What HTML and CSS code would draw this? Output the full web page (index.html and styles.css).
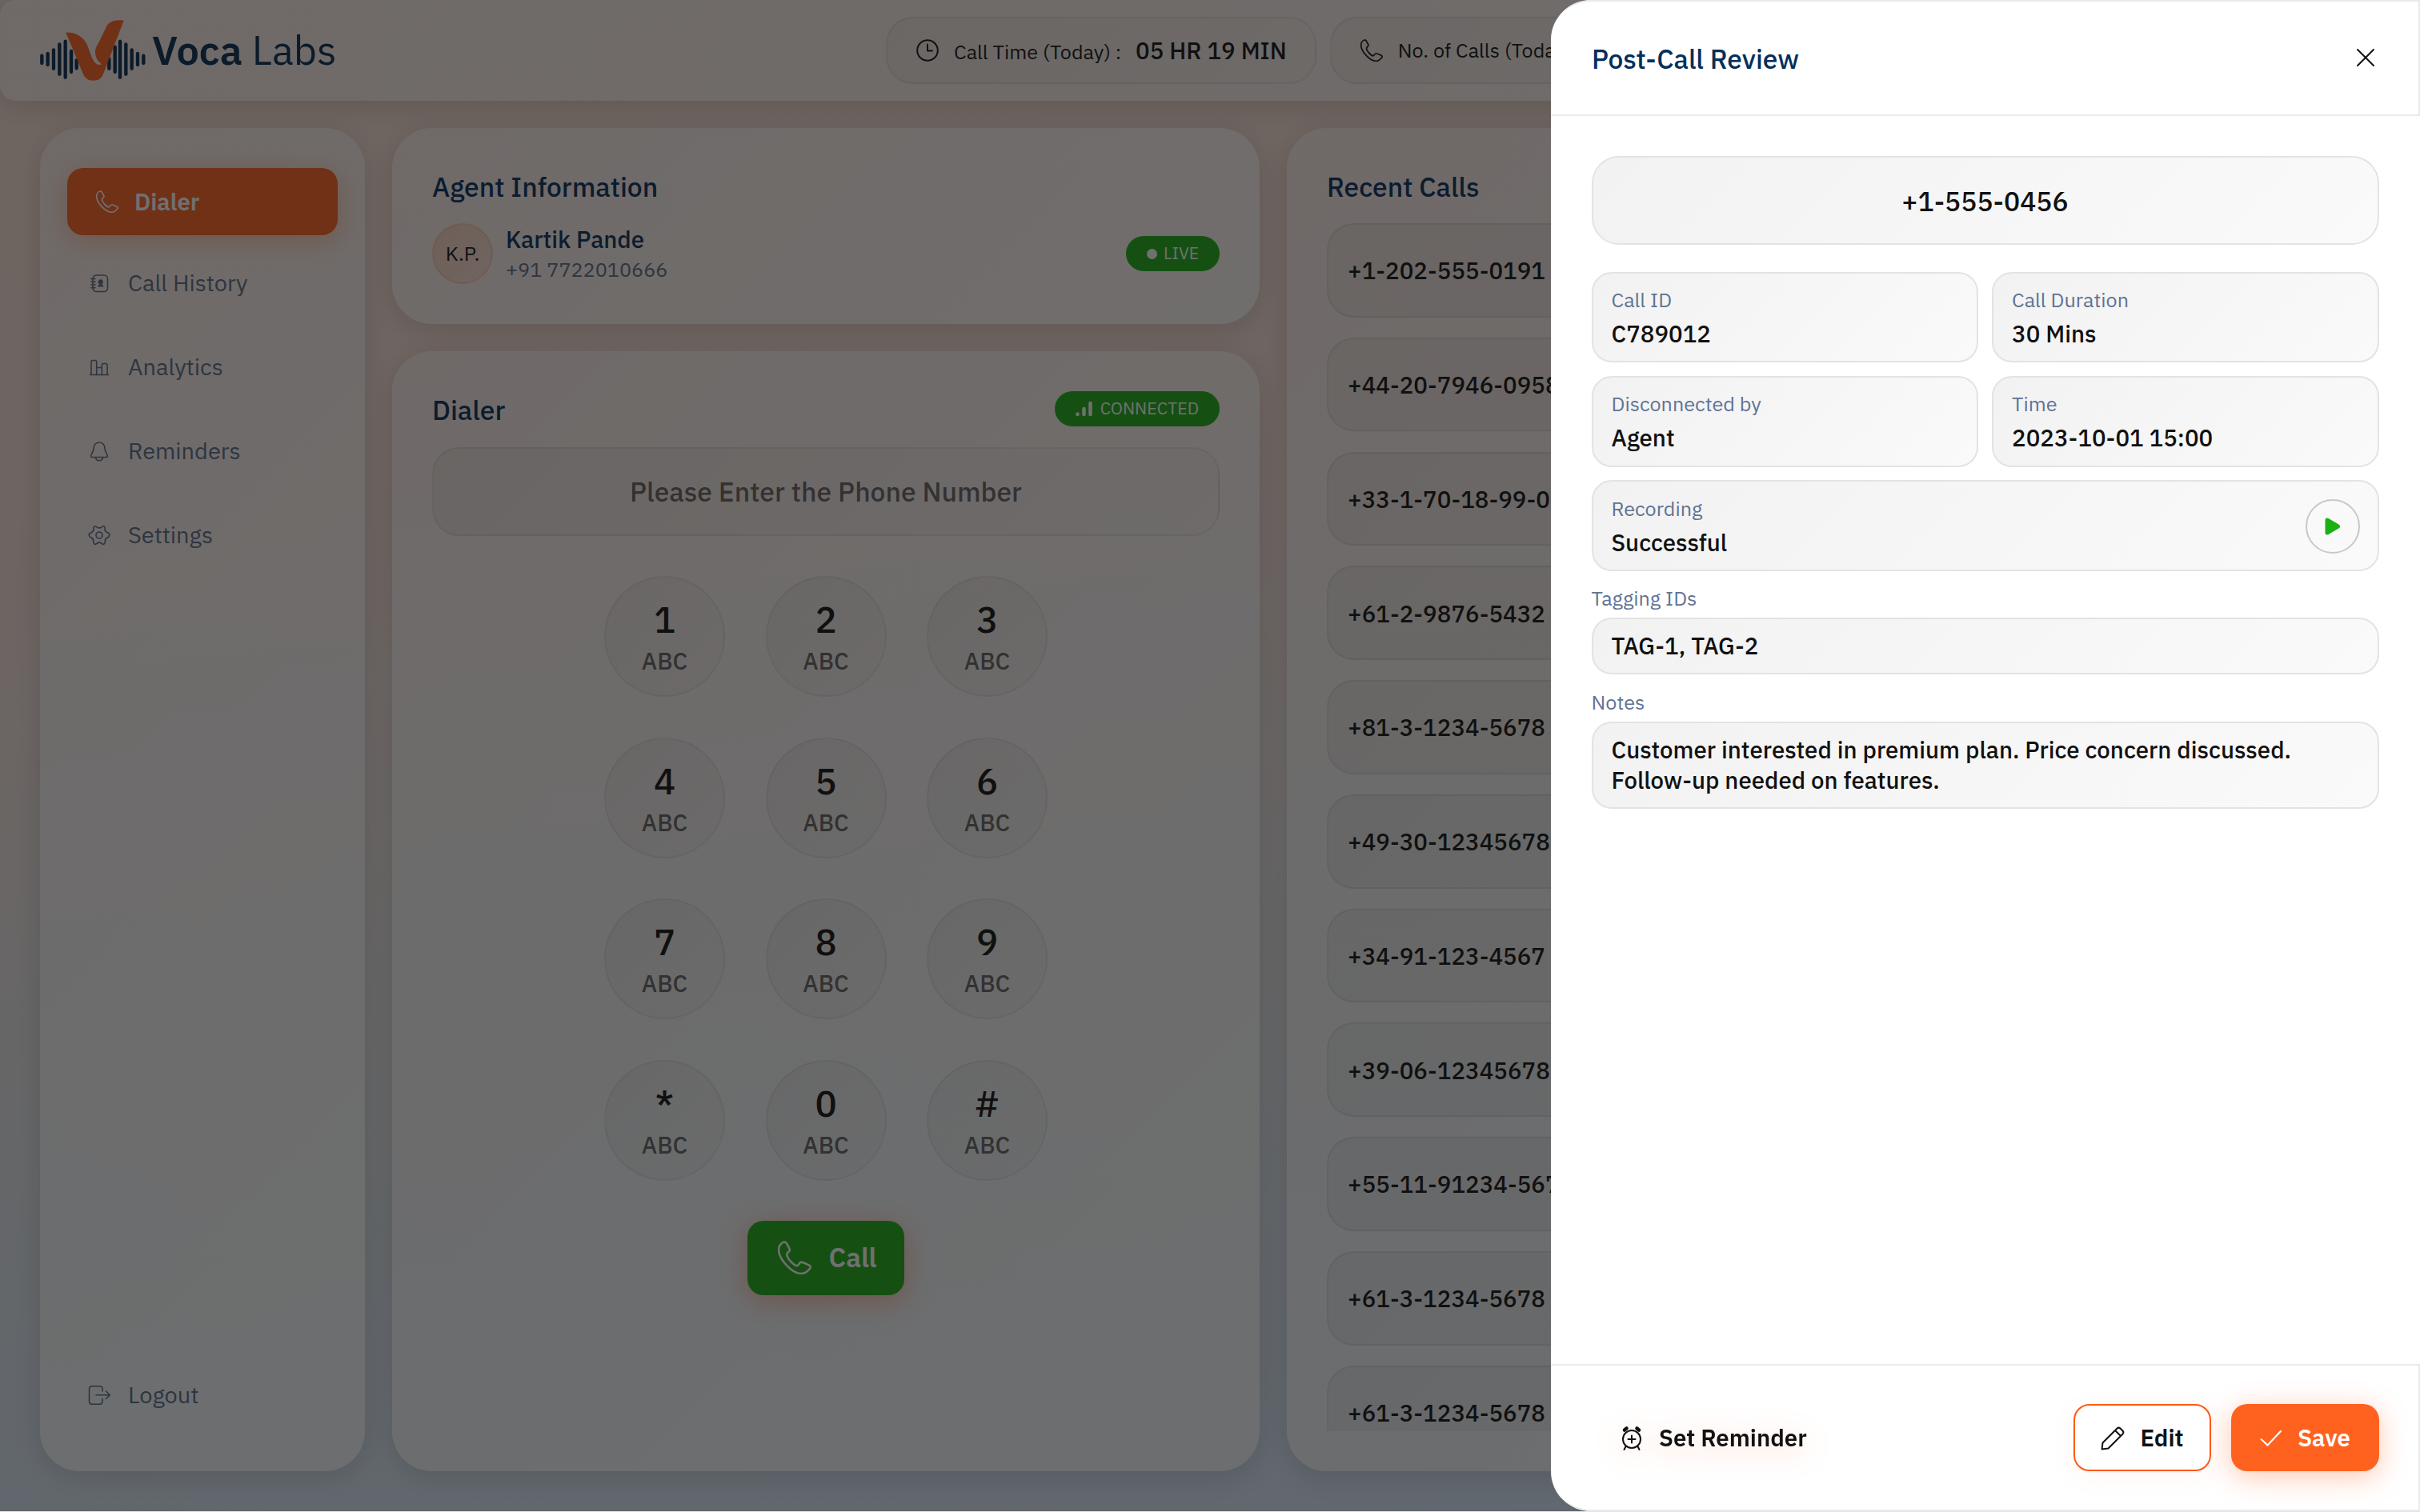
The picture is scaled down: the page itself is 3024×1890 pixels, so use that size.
FILE: index.html
```html
<!DOCTYPE html>
<html lang="en">
<head>
    <meta charset="UTF-8">
    <meta name="viewport" content="width=device-width, initial-scale=1.0">
    <title>Voca Labs</title>
    <link rel="stylesheet" href="styles.css">
</head>
<body>
    <!-- shared icons -->
    <svg class="icon-defs" width="0" height="0">
        <symbol id="phone" viewBox="0 0 82 82">
            <path d="M15 3C19 2 21 5 23 9L29 21C31 26 22 28 22 33C22 42 38 60 47 61C51 61 52 52 57 52C62 52 72 58 77 60C81 63 80 66 77 69C71 76 65 80 57 80C35 80 2 45 2 22C2 14 7 5 15 3Z" fill="none" stroke="currentColor" stroke-width="5" stroke-linejoin="round"/>
        </symbol>
    </svg>

    <div class="app">
        <header class="header">
            <div class="logo">
                <svg class="logo-mark" viewBox="150 75 396 228">
                    <g stroke="#042b50" stroke-width="13" stroke-linecap="round">
                        <path d="M157 209V237M179 201V243M201 187V257M223 166V278M245 155V290M267 192V270M287 226V256"/>
                        <path d="M409 221V257M431 176V270M450 155V290M472 166V278M494 187V257M516 201V243M538 209V237"/>
                    </g>
                    <path fill="#ff621f" d="M247 122C282 120 311 138 325 165C340 196 346 240 372 243L383 241C366 232 355 212 357 188C359 180 366 166 372 156L398 102C408 80 430 72 464 77L388 275C382 292 370 302 350 302C330 302 318 292 312 278Z"/>
                </svg>
                <div class="logo-text"><b>Voca</b> Labs</div>
            </div>
            <div class="stats">
                <div class="stat">
                    <svg class="stat-icon" viewBox="0 0 28 28" fill="none" stroke="currentColor" stroke-width="2" stroke-linecap="round" stroke-linejoin="round"><circle cx="14" cy="14" r="12.8"/><path d="M14 6.5V14.5H20"/></svg>
                    <div class="stat-text">Call Time (Today) : <strong>05 HR 19 MIN</strong></div>
                </div>
                <div class="stat calls">
                    <svg class="stat-icon"><use href="#phone"/></svg>
                    <div class="stat-text">No. of Calls (Today)</div>
                </div>
            </div>
        </header>

        <main class="main">
            <nav class="card sidebar">
                <a class="nav-item active">
                    <svg class="nav-icon"><use href="#phone"/></svg>Dialer
                </a>
                <a class="nav-item">
                    <svg class="nav-icon" viewBox="0 0 28 28" fill="none" stroke="currentColor" stroke-width="1.6" stroke-linecap="round">
                        <rect x="6" y="4" width="18.5" height="20.5" rx="4.5"/>
                        <path d="M4 8.500H9M4 12.200H9M4 16H9M4 19.700H9"/>
                        <path d="M12 18.500C12 16.500 13.500 16 14.500 15.500A3.200 3.200 0 1 1 17 15.500C18 16 19.500 16.500 19.500 18.500Z" fill="currentColor" stroke="none"/>
                    </svg>Call History
                </a>
                <a class="nav-item">
                    <svg class="nav-icon" viewBox="0 0 28 28" fill="none" stroke="currentColor" stroke-width="1.6" stroke-linecap="round" stroke-linejoin="round">
                        <path d="M2.500 23.500H25.500M4 23V7.500Q4 5.500 6 5.500H9Q10.700 5.500 10.700 7.500V23M10.700 14.500H17.300M17.300 23V11.500Q17.300 9.500 19 9.500H22Q24 9.500 24 11.500V23"/>
                    </svg>Analytics
                </a>
                <a class="nav-item">
                    <svg class="nav-icon" viewBox="0 0 28 28" fill="none" stroke="currentColor" stroke-width="1.6" stroke-linecap="round" stroke-linejoin="round">
                        <path d="M14 3C9.500 3 7 6.500 7 10.500C7 15 3.500 18.500 3.500 20Q3.500 21.500 5 21.500H23Q24.500 21.500 24.500 20C24.500 18.500 21 15 21 10.500C21 6.500 18.500 3 14 3ZM9.500 22C10 27 18 27 18.500 22"/>
                    </svg>Reminders
                </a>
                <a class="nav-item">
                    <svg class="nav-icon" viewBox="0 0 28 28" fill="none" stroke="currentColor" stroke-width="1.6" stroke-linejoin="round">
                        <circle cx="14" cy="14" r="4"/>
                        <path d="M7.500 3.500Q9 1.800 11 3.800Q14 6 17 3.800Q19 1.800 20.500 3.500Q21.500 4 21 6.500Q21 9.500 24.500 10.800Q27.500 12 26.500 14.500Q26.200 16.300 24 17Q21 18.500 21.300 22Q21.500 24 20 25Q18.500 26 17 24.300Q14 21.800 11 24.300Q9.500 26 8 25Q6.500 24 6.700 22Q7 18.500 4 17Q1.500 16 1.200 14Q1 12 3.500 11Q7 9.500 7 6.500Q6.700 4.500 7.500 3.500Z"/>
                    </svg>Settings
                </a>
                <a class="nav-item logout">
                    <svg class="nav-icon" viewBox="0 0 28 28" fill="none" stroke="currentColor" stroke-width="1.600" stroke-linecap="round" stroke-linejoin="round">
                        <path d="M18 9V6.500Q18 2.800 14.500 2.800H5Q1.500 2.800 1.500 6.500V21.500Q1.500 25.200 5 25.200H14.500Q18 25.200 18 21.500V18.500M10 13.800H27M22.500 9L27.300 13.800L22.500 18.500"/>
                    </svg>Logout
                </a>
            </nav>

            <div class="center">
                <section class="card agent">
                    <h2>Agent Information</h2>
                    <div class="agent-row">
                        <div class="avatar">K.P.</div>
                        <div>
                            <div class="agent-name">Kartik Pande</div>
                            <div class="agent-phone">+91 7722010666</div>
                        </div>
                        <div class="pill"><span class="dot"></span>LIVE</div>
                    </div>
                </section>

                <section class="card dialer">
                    <div class="dialer-head">
                        <h2>Dialer</h2>
                        <div class="pill connected">
                            <svg class="signal" viewBox="0 0 22 20" stroke="currentColor" stroke-width="4.400" stroke-linecap="round"><path d="M2.500 16.500V17M10.500 10V17M18.500 3V17"/></svg>CONNECTED
                        </div>
                    </div>
                    <div class="number-input">Please Enter the Phone Number</div>
                    <div class="keypad">
                        <div class="key">1<small>ABC</small></div>
                        <div class="key">2<small>ABC</small></div>
                        <div class="key">3<small>ABC</small></div>
                        <div class="key">4<small>ABC</small></div>
                        <div class="key">5<small>ABC</small></div>
                        <div class="key">6<small>ABC</small></div>
                        <div class="key">7<small>ABC</small></div>
                        <div class="key">8<small>ABC</small></div>
                        <div class="key">9<small>ABC</small></div>
                        <div class="key">*<small>ABC</small></div>
                        <div class="key">0<small>ABC</small></div>
                        <div class="key">#<small>ABC</small></div>
                    </div>
                    <div class="call-button">
                        <svg class="call-icon"><use href="#phone"/></svg>Call
                    </div>
                </section>
            </div>

            <section class="card recent">
                <h2>Recent Calls</h2>
                <div class="recent-list">
                    <div class="recent-item">+1-202-555-0191</div>
                    <div class="recent-item">+44-20-7946-0958</div>
                    <div class="recent-item">+33-1-70-18-99-00</div>
                    <div class="recent-item">+61-2-9876-5432</div>
                    <div class="recent-item">+81-3-1234-5678</div>
                    <div class="recent-item">+49-30-12345678</div>
                    <div class="recent-item">+34-91-123-4567</div>
                    <div class="recent-item">+39-06-12345678</div>
                    <div class="recent-item">+55-11-91234-5678</div>
                    <div class="recent-item">+61-3-1234-5678</div>
                    <div class="recent-item">+61-3-1234-5678</div>
                </div>
            </section>
        </main>
    </div>

    <div class="overlay">
        <aside class="drawer">
            <div class="drawer-header">
                <h2>Post-Call Review</h2>
                <svg class="close" viewBox="0 0 24 24" stroke="#111" stroke-width="2" stroke-linecap="round"><path d="M2 2L22 22M22 2L2 22"/></svg>
            </div>
            <div class="drawer-body">
                <div class="phone-box">+1-555-0456</div>
                <div class="fields">
                    <div class="field">
                        <div class="label">Call ID</div>
                        <div class="value">C789012</div>
                    </div>
                    <div class="field">
                        <div class="label">Call Duration</div>
                        <div class="value">30 Mins</div>
                    </div>
                    <div class="field">
                        <div class="label">Disconnected by</div>
                        <div class="value">Agent</div>
                    </div>
                    <div class="field">
                        <div class="label">Time</div>
                        <div class="value">2023-10-01 15:00</div>
                    </div>
                    <div class="field wide">
                        <div>
                            <div class="label">Recording</div>
                            <div class="value">Successful</div>
                        </div>
                        <div class="play">
                            <svg viewBox="0 0 20 22" width="20" height="22"><path d="M3 3V19L16.500 11Z" fill="#1db014" stroke="#1db014" stroke-width="5" stroke-linejoin="round"/></svg>
                        </div>
                    </div>
                </div>
                <div class="label outside">Tagging IDs</div>
                <div class="text-box">TAG-1, TAG-2</div>
                <div class="label outside">Notes</div>
                <div class="text-box">Customer interested in premium plan. Price concern discussed.<br>Follow-up needed on features.</div>
            </div>
            <div class="drawer-footer">
                <div class="button reminder">
                    <svg viewBox="0 0 28 32" width="28" height="32" fill="none" stroke="#111" stroke-width="2" stroke-linecap="round">
                        <circle cx="14" cy="17" r="11"/>
                        <path d="M14 12.500V21.500M9.500 17H18.500M6.500 26L4.500 30M21.500 26L23.500 30"/>
                        <path d="M5 5.500L7.500 3.500M23 5.500L20.500 3.500" stroke-width="4.500"/>
                    </svg>Set Reminder
                </div>
                <div class="button edit">
                    <svg viewBox="0 0 30 30" width="30" height="30" fill="none" stroke="#111" stroke-width="2" stroke-linejoin="round">
                        <path d="M1.500 28.500L2.500 20.500L20.500 2.500Q22.500 0.800 24.500 2.500L27.500 5.500Q29.200 7.500 27.500 9.500L9.500 27.500ZM18 5L25 12"/>
                    </svg>Edit
                </div>
                <div class="button save">
                    <svg viewBox="0 0 28 22" width="28" height="22" fill="none" stroke="#fff" stroke-width="2" stroke-linecap="round" stroke-linejoin="round"><path d="M1.500 12L9.500 19.500L26 2"/></svg>Save
                </div>
            </div>
        </aside>
    </div>
</body>
</html>
```
FILE: styles.css
```css
* {
    margin: 0;
    padding: 0;
    box-sizing: border-box;
}

body {
    height: 1890px;
    overflow: hidden;
    background-color: #e4e2e8;
    font-family: 'IBM Plex Sans', 'Noto Sans', sans-serif;
    color: #111;
    line-height: 1.3;
}

.icon-defs {
    position: absolute;
}

.app {
    height: 1889px;
    display: flex;
    flex-direction: column;
    background: linear-gradient(175deg, #fce3d7 0%, #fbe2da 30%, #efe6e3 50%, #e0e7ee 72%, #d9ebff 100%);
}

.header {
    height: 126px;
    flex-shrink: 0;
    display: grid;
    grid-template-columns: 1057px 1fr;
    align-items: center;
    padding: 0 50px;
    border-radius: 20px;
    background: linear-gradient(100deg, rgba(255, 255, 255, 0.5), rgba(255, 255, 255, 0.65));
    box-shadow: 0 7px 34px rgba(17, 17, 17, 0.16);
}

.logo {
    display: flex;
    align-items: center;
    gap: 8px;
}

.logo-mark {
    width: 132px;
    height: 76px;
}

.logo-text {
    font-size: 50.4px;
    font-weight: 400;
    color: #042b50;
    white-space: pre;
}

.logo-text b {
    font-weight: 600;
}

.stats {
    display: flex;
    gap: 17px;
}

.stat {
    flex-shrink: 0;
    height: 84px;
    display: flex;
    align-items: center;
    gap: 19px;
    padding: 0 35px 0 36px;
    border: 2px solid rgba(17, 17, 17, 0.07);
    border-radius: 34px;
    background: linear-gradient(135deg, rgba(17, 17, 17, 0.04), rgba(17, 17, 17, 0.01));
}

.stat.calls {
    width: 470px;
}

.stat-icon {
    width: 28px;
    height: 28px;
}

.stat-text {
    font-size: 25.2px;
    white-space: nowrap;
}

.stat-text strong {
    margin-left: 12px;
    font-size: 29.4px;
    font-weight: 500;
}

.main {
    flex: 1;
    min-height: 0;
    display: grid;
    grid-template-columns: 406px 1084px 1fr;
    gap: 34px;
    padding: 34px 50px 50px;
}

.card {
    padding: 50px;
    border-radius: 50px;
    background: linear-gradient(135deg, rgba(255, 255, 255, 0.5), rgba(255, 255, 255, 0.8));
    box-shadow: 0 7px 34px rgba(17, 17, 17, 0.14);
}

h2 {
    font-size: 33.6px;
    line-height: 47px;
    font-weight: 500;
    color: #052f5c;
}

.sidebar {
    display: flex;
    flex-direction: column;
    gap: 21px;
    padding: 50px 34px;
}

.nav-item {
    height: 84px;
    display: flex;
    align-items: center;
    gap: 22px;
    padding-left: 26px;
    font-size: 29px;
    font-weight: 400;
    color: #5a6c88;
}

.nav-icon {
    width: 28px;
    height: 28px;
}

.nav-item.active {
    gap: 20px;
    margin-bottom: -3px;
    padding-left: 36px;
    border-radius: 20px;
    background-color: #ff621f;
    box-shadow: 0 7px 34px rgba(255, 98, 31, 0.35);
    font-size: 29.4px;
    font-weight: 600;
    color: #fff;
}

.nav-item.logout {
    margin-top: auto;
    margin-bottom: 3px;
}

.center {
    display: flex;
    flex-direction: column;
    gap: 34px;
    min-height: 0;
}

.agent {
    height: 245px;
}

.agent-row {
    display: flex;
    align-items: center;
    margin-top: 22px;
}

.avatar {
    width: 76px;
    height: 76px;
    display: flex;
    justify-content: center;
    align-items: center;
    margin-right: 16px;
    padding-top: 1px;
    border: 2px solid rgba(255, 98, 31, 0.15);
    border-radius: 50%;
    background: linear-gradient(135deg, rgba(255, 98, 31, 0.2), rgba(255, 98, 31, 0.1));
    font-size: 25.2px;
}

.agent-name {
    font-size: 29.4px;
    line-height: 39px;
    font-weight: 500;
    color: #052f5c;
}

.agent-phone {
    font-size: 25.2px;
    line-height: 36px;
    font-weight: 400;
    color: #5a6c88;
}

.pill {
    height: 44px;
    display: flex;
    align-items: center;
    gap: 8px;
    margin-left: auto;
    padding: 0 26px;
    border-radius: 22px;
    background-color: #1db014;
    font-size: 21px;
    font-weight: 400;
    color: #fff;
}

.dot {
    width: 13px;
    height: 13px;
    border-radius: 50%;
    background-color: #fff;
}

.connected {
    gap: 9px;
    font-size: 21.4px;
}

.signal {
    width: 22px;
    height: 20px;
}

.dialer {
    flex: 1;
    display: flex;
    flex-direction: column;
    align-items: center;
}

.dialer-head {
    width: 100%;
    height: 44px;
    display: flex;
    align-items: center;
}

.dialer-head h2 {
    padding-top: 2px;
}

.number-input {
    width: 100%;
    height: 111px;
    display: flex;
    justify-content: center;
    align-items: center;
    margin-top: 26px;
    padding-top: 1px;
    border: 2px solid rgba(17, 17, 17, 0.07);
    border-radius: 34px;
    background: linear-gradient(135deg, rgba(17, 17, 17, 0.05), rgba(17, 17, 17, 0.01));
    font-size: 33.6px;
    font-weight: 500;
    color: rgba(17, 17, 17, 0.65);
}

.keypad {
    display: grid;
    grid-template-columns: repeat(3, 151px);
    gap: 50.5px;
    margin-top: 50px;
}

.key {
    height: 151px;
    display: flex;
    flex-direction: column;
    justify-content: center;
    align-items: center;
    gap: 4px;
    padding-bottom: 2px;
    border: 2px solid rgba(17, 17, 17, 0.06);
    border-radius: 50%;
    background: linear-gradient(135deg, rgba(17, 17, 17, 0.05), rgba(17, 17, 17, 0.02));
    font-size: 45.4px;
    line-height: 59px;
    font-weight: 500;
}

.key small {
    font-size: 29.4px;
    line-height: 38px;
    font-weight: 500;
    color: rgba(17, 17, 17, 0.65);
}

.call-button {
    width: 196px;
    height: 93px;
    display: flex;
    justify-content: center;
    align-items: center;
    gap: 22px;
    margin-top: 50px;
    padding-left: 3px;
    border-radius: 20px;
    background-color: #1db014;
    box-shadow: 0 7px 34px rgba(255, 98, 31, 0.4);
    font-size: 33.6px;
    font-weight: 600;
    color: #fff;
}

.call-icon {
    width: 42px;
    height: 42px;
}

.recent {
    display: flex;
    flex-direction: column;
    min-height: 0;
}

.recent-list {
    flex: 1;
    min-height: 0;
    display: flex;
    flex-direction: column;
    gap: 25.2px;
    margin-top: 22px;
    overflow: hidden;
}

.recent-item {
    height: 117.6px;
    flex-shrink: 0;
    display: flex;
    align-items: center;
    padding: 1px 24px 0;
    border: 2px solid rgba(17, 17, 17, 0.07);
    border-radius: 34px;
    background: linear-gradient(135deg, rgba(17, 17, 17, 0.05), rgba(17, 17, 17, 0.03));
    font-size: 29.4px;
    font-weight: 500;
}

.overlay {
    position: absolute;
    top: 0;
    left: 0;
    width: 100%;
    height: 1889px;
    display: flex;
    justify-content: flex-end;
    background-color: rgba(17, 17, 17, 0.6);
}

.drawer {
    width: 1086px;
    height: 1889px;
    display: flex;
    flex-direction: column;
    border-radius: 50px 0 0 50px;
    background-color: #fff;
    overflow: hidden;
}

.drawer-header {
    height: 145px;
    display: flex;
    justify-content: space-between;
    align-items: center;
    padding: 1px 54px 0 51px;
    border: 2px solid #eaeaea;
    border-left: none;
    border-top-left-radius: 50px;
}

.close {
    width: 24px;
    height: 24px;
    margin-bottom: 2px;
}

.drawer-body {
    flex: 1;
    padding: 50px 51.5px 50px 50.5px;
}

.phone-box,
.field,
.text-box {
    border: 2px solid #e3e3e3;
    background: linear-gradient(135deg, #f2f2f2, #fafafa);
}

.phone-box {
    height: 111px;
    display: flex;
    justify-content: center;
    align-items: center;
    padding-top: 2px;
    border-radius: 34px;
    font-size: 33.6px;
    font-weight: 500;
}

.fields {
    display: grid;
    grid-template-columns: 1fr 1fr;
    gap: 16.8px 17px;
    margin-top: 34px;
}

.field {
    height: 113.4px;
    display: flex;
    flex-direction: column;
    justify-content: center;
    padding: 1px 22px 0 23px;
    border-radius: 25px;
}

.field.wide {
    grid-column: span 2;
    flex-direction: row;
    justify-content: space-between;
    align-items: center;
}

.label {
    font-size: 25.2px;
    line-height: 33px;
    font-weight: 400;
    color: #5f7393;
}

.value {
    margin-top: 7px;
    font-size: 29.4px;
    line-height: 38px;
    font-weight: 500;
}

.label.outside {
    margin: 17.5px 0 8px;
}

.play {
    width: 68px;
    height: 68px;
    display: flex;
    justify-content: center;
    align-items: center;
    border: 2px solid #c8c8c8;
    border-radius: 50%;
}

.text-box {
    padding: 14px 22px 15px 23px;
    border-radius: 25px;
    font-size: 29.4px;
    line-height: 38px;
    font-weight: 500;
}

.drawer-footer {
    height: 184px;
    display: flex;
    align-items: center;
    gap: 25px;
    padding: 0 49px 0 51px;
    border: 2px solid #eaeaea;
    border-left: none;
    border-bottom-left-radius: 50px;
}

.button {
    height: 84px;
    display: flex;
    align-items: center;
    justify-content: center;
    gap: 19px;
    padding-top: 1px;
    border-radius: 20px;
    font-size: 29.4px;
    font-weight: 600;
}

.reminder {
    gap: 20px;
    margin-right: auto;
    padding-left: 36px;
    filter: drop-shadow(0 7px 17px rgba(255, 98, 31, 0.3));
}

.edit {
    width: 172px;
    border: 2px solid #ff5a14;
    background-color: #fff;
    box-shadow: 0 7px 34px rgba(255, 98, 31, 0.05);
}

.save {
    width: 185px;
    background-color: #ff621f;
    box-shadow: 0 7px 34px rgba(255, 98, 31, 0.35);
    color: #fff;
}
```
